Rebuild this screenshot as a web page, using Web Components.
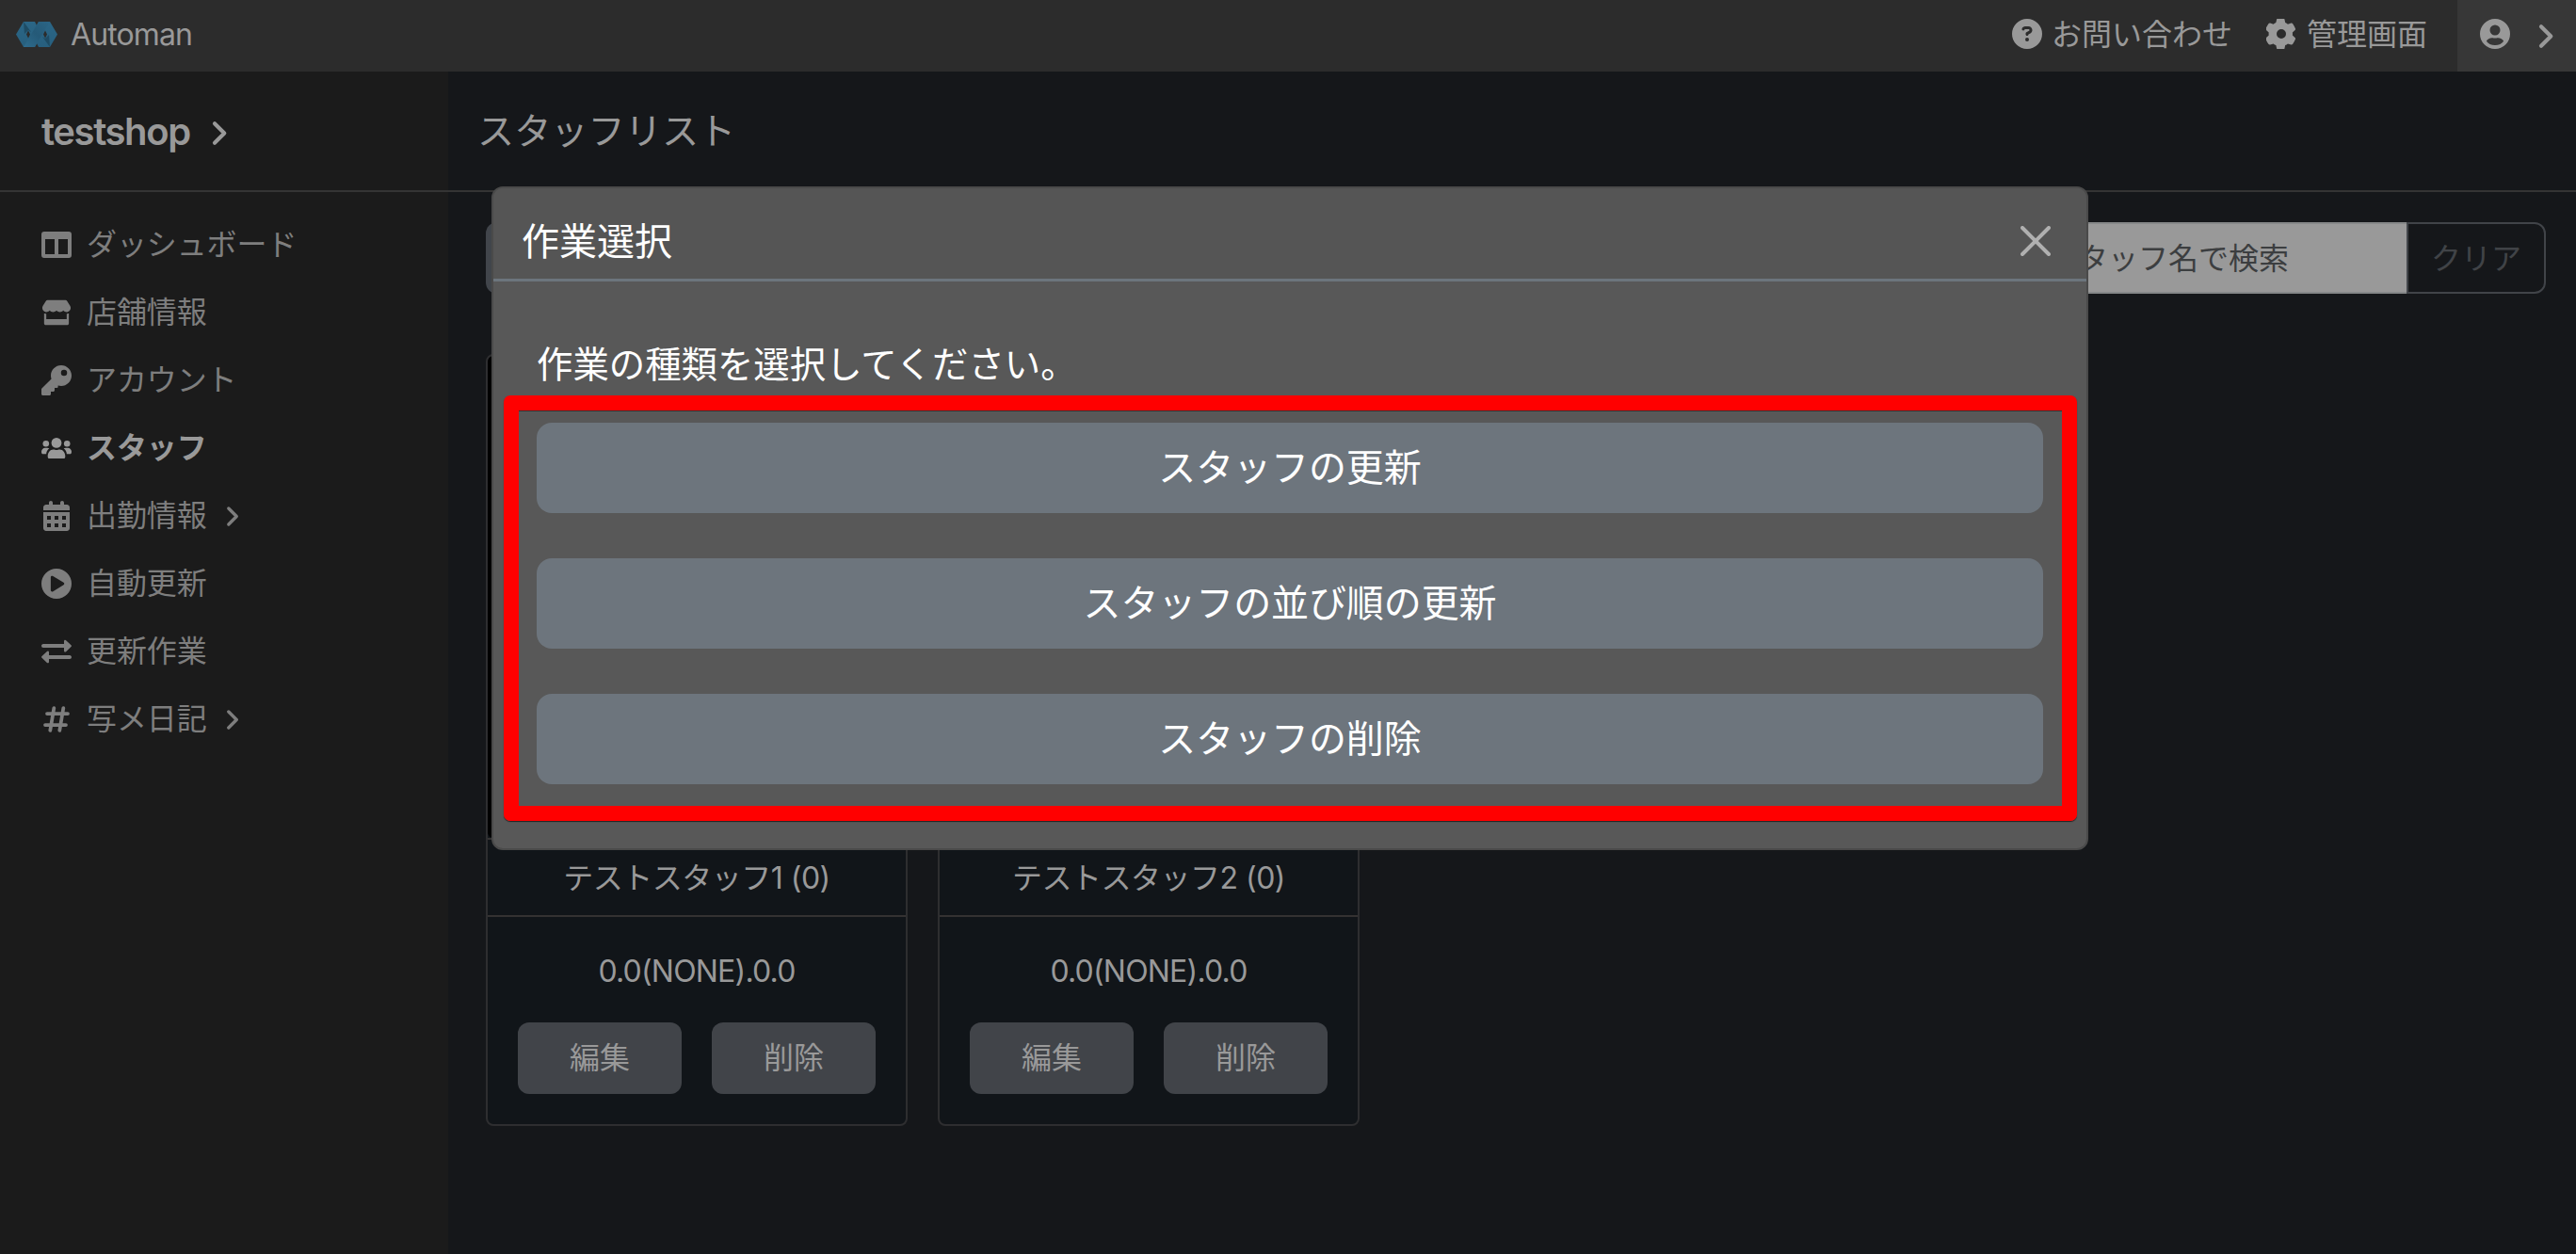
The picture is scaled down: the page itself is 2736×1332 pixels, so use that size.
<!DOCTYPE html>
<html lang="ja">
<head>
<meta charset="utf-8">
<title>Automan</title>
<style>
    html, body {
        margin: 0;
        height: 100%;
        overflow: hidden;
    }

    body {
        background: #15171a;
        color: #999;
        font-family: Inter, "Noto Sans CJK JP", sans-serif;
        font-size: 32px;
        line-height: 48px;
    }
</style>
</head>
<body>
<automan-app></automan-app>

<script>
// Icon shapes: [viewBox, markup]
const icons = {
    help: ['0 0 512 512', '<path fill-rule="evenodd" d="M256 0a256 256 0 1 1 0 512a256 256 0 0 1 0-512zM170 165c8-22 29-37 53-37h58c35 0 63 28 63 63c0 23-12 43-32 55l-32 18c0 13-11 24-24 24s-24-11-24-24v-14c0-9 5-17 12-21l44-25c5-3 8-8 8-13c0-9-7-15-15-15h-58c-4 0-7 2-8 5l-1 1c-4 13-18 19-30 15c-13-4-19-18-15-31zM256 320a32 32 0 1 1 0 64a32 32 0 0 1 0-64z"/>'],
    gear: ['0 0 512 512', '<path fill-rule="evenodd" d="M496 167c3 9 0 18-7 25l-43 39c2 17 2 33 0 50l43 39c7 7 10 16 7 25c-12 32-28 61-48 88c-6 7-16 9-25 7l-56-18c-13 10-28 19-44 25l-12 58c-2 9-9 16-19 18c-32 5-64 5-96 0c-9-2-16-9-18-18l-13-58c-16-6-30-15-43-25l-56 18c-9 3-19 0-25-7c-20-26-36-56-48-88c-3-9 0-18 7-25l43-39c-2-17-2-33 0-50l-43-39c-7-7-10-16-7-25c12-32 28-61 48-88c6-7 16-10 25-7l56 18c13-10 27-19 43-25l13-58c2-9 9-16 18-18c32-5 64-5 96 0c10 2 17 9 19 18l12 58c16 6 31 15 44 25l56-18c9-3 19 0 25 7c20 27 36 56 48 88zM256 336a80 80 0 1 0 0-160a80 80 0 1 0 0 160z"/>'],
    user: ['0 0 512 512', '<path fill-rule="evenodd" d="M256 0a256 256 0 1 1 0 512a256 256 0 0 1 0-512zM256 104a88 88 0 1 0 0 176a88 88 0 0 0 0-176zM256 448c64 0 118-24 146-68c-14-36-56-58-96-58c-22 0-28 6-50 6s-28-6-50-6c-40 0-82 22-96 58c28 44 82 68 146 68z"/>'],
    chevron: ['0 0 320 512', '<path d="M90 96L250 256L90 416" fill="none" stroke="currentColor" stroke-width="64" stroke-linecap="round" stroke-linejoin="round"/>'],
    close: ['0 0 16 16', '<path d="M1 1L15 15M15 1L1 15" fill="none" stroke="currentColor" stroke-width="2" stroke-linecap="round"/>'],
    columns: ['0 0 512 512', '<path fill-rule="evenodd" d="M48 32H464a48 48 0 0 1 48 48V432a48 48 0 0 1-48 48H48a48 48 0 0 1-48-48V80a48 48 0 0 1 48-48zM64 160V416H224V160zM288 160V416H448V160z"/>'],
    store: ['0 0 576 512', '<path d="M547 125L490 34C484 24 473 16 460 16H116C104 16 92 24 86 34L29 125c-30 47-3 113 52 120c4 1 8 1 12 1c26 0 49-11 65-29c16 18 39 29 65 29s49-11 65-29c16 18 39 29 65 29s49-11 65-29c16 18 39 29 65 29c4 0 8 0 12-1c55-7 82-73 52-120zM500 278c-6 1-11 2-17 2V384H93V280c-6 0-12-1-17-2c-9-1-17-2-25-3V464c0 18 15 32 33 32H492c18 0 32-14 32-32V275c-8 1-16 2-24 3z"/>'],
    key: ['0 0 512 512', '<path fill-rule="evenodd" d="M336 352c97 0 176-79 176-176S433 0 336 0S160 79 160 176c0 19 3 37 9 54L7 391c-5 5-7 11-7 17v80c0 13 11 24 24 24h112c13 0 24-11 24-24v-40h40c13 0 24-11 24-24v-40h40c6 0 12-2 17-7l1-33c17 5 35 8 54 8zM384 76a52 52 0 1 1 0 104a52 52 0 1 1 0-104z"/>'],
    users: ['0 0 640 512', '<circle cx="320" cy="144" r="108"/><circle cx="96" cy="160" r="66"/><circle cx="544" cy="160" r="66"/><path d="M134 430C134 350 180 284 252 284C280 284 290 298 320 298S360 284 388 284C460 284 506 350 506 430C506 464 495 478 475 478H165C145 478 134 464 134 430zM0 330c0-44 36-80 80-80h43c16 0 31 4 45 10C125 290 105 332 103 382H41C10 382 0 362 0 330zM640 330c0-44-36-80-80-80h-43c-16 0-31 4-45 10c43 30 63 72 65 122h62c31 0 41-20 41-52z"/>'],
    calendar: ['0 0 448 512', '<path fill-rule="evenodd" d="M128 0c18 0 32 14 32 32V64H288V32c0-18 14-32 32-32s32 14 32 32V64h48c27 0 48 22 48 48v48H0V112C0 86 22 64 48 64H96V32C96 14 110 0 128 0zM0 192H448V464c0 26-21 48-48 48H48c-26 0-48-22-48-48zM64 256v64h64V256zM192 256v64h64V256zM320 256v64h64V256zM64 384v64h64V384zM192 384v64h64V384zM320 384v64h64V384z"/>'],
    play: ['0 0 512 512', '<path fill-rule="evenodd" d="M0 256a256 256 0 1 1 512 0a256 256 0 1 1-512 0zM172 125c-9 5-14 12-14 21V366c0 9 5 16 14 21s17 4 25 0L377 277c7-5 11-12 11-21s-4-16-11-20L197 126c-8-5-17-5-25-1z"/>'],
    exchange: ['0 0 512 512', '<path d="M32 128H384V84c0-26 20-32 38-14l74 70c21 20 21 24 0 44l-74 70c-18 18-38 12-38-14V192H32c-42 0-42-64 0-64zM480 320c42 0 42 64 0 64H128v44c0 26-20 32-38 14l-74-70c-21-20-21-24 0-44l74-70c18-18 38-12 38 14v48z"/>'],
    hash: ['0 0 448 512', '<path d="M181 66L117 446M341 66L277 446M64 160H416M32 352H384" fill="none" stroke="currentColor" stroke-width="60" stroke-linecap="round"/>']
};

class AppIcon extends HTMLElement {
    constructor() {
        super();
        this.attachShadow({ mode: 'open' });
    }

    connectedCallback() {
        const [box, shape] = icons[this.getAttribute('name')];
        this.shadowRoot.innerHTML = `
            <style>
                :host { display: block; flex: none; width: 32px; height: 32px; }
                svg { display: block; width: 100%; height: 100%; fill: currentColor; }
            </style>
            <svg viewBox="${box}">${shape}</svg>
        `;
    }
}
customElements.define('app-icon', AppIcon);

class AppLogo extends HTMLElement {
    constructor() {
        super();
        this.attachShadow({ mode: 'open' });
        this.shadowRoot.innerHTML = `
            <style>
                :host { display: block; width: 44px; height: 27px; }
                svg { display: block; }
            </style>
            <svg width="44" height="27" viewBox="0 0 44 27">
                <defs>
                    <linearGradient id="a" x1="0" y1="0" x2="0" y2="1">
                        <stop offset="0" stop-color="#2b6686"/><stop offset="1" stop-color="#275f7e"/>
                    </linearGradient>
                    <linearGradient id="b" x1="1" y1="0" x2="0" y2="1">
                        <stop offset="0" stop-color="#2b6585"/><stop offset=".5" stop-color="#255a78"/><stop offset="1" stop-color="#2e6c8e"/>
                    </linearGradient>
                </defs>
                <path fill="url(#a)" d="M8 0H20L22 4L24 0H36L44 13.500L36 27H24L22 23L20 27H8L0 13.500z"/>
                <path fill="#1c465d" d="M8 0L16 11L13 9L9 13zM36 27L28 16L31 18L35 14z" opacity=".8"/>
                <path fill="url(#b)" d="M24 0H36L20 27H8z"/>
                <path fill="#2c2c2c" d="M13 9.500L15 13.500L13 17.500L11 13.500zM31 9.500L33 13.500L31 17.500L29 13.500z"/>
            </svg>
        `;
    }
}
customElements.define('app-logo', AppLogo);

class AppHeader extends HTMLElement {
    constructor() {
        super();
        this.attachShadow({ mode: 'open' });
        this.shadowRoot.innerHTML = `
            <style>
                :host {
                    display: flex;
                    align-items: center;
                    height: 76px;
                    background: #2c2c2c;
                }
                app-logo { margin: -3px 0 0 17px; }
                .brand { margin: -2px 0 0 14px; letter-spacing: -0.9px; }
                .links { display: flex; height: 100%; margin-left: auto; }
                .link { display: flex; align-items: center; margin-right: 36px; }
                .link span { margin-top: -3px; }
                .link + .link { margin-right: 32px; }
                .link app-icon { margin: -5px 10px 0 0; }
                .link + .link app-icon { margin-right: 11px; }
                .account {
                    display: flex;
                    align-items: center;
                    box-sizing: border-box;
                    width: 126px;
                    padding-left: 24px;
                    background: #373737;
                }
                .account app-icon { margin-top: -5px; }
                .account app-icon:last-child { width: 21px; height: 33px; margin: 1px 0 0 27px; }
            </style>
            <app-logo></app-logo>
            <span class="brand">Automan</span>
            <div class="links">
                <div class="link"><app-icon name="help"></app-icon><span>お問い合わせ</span></div>
                <div class="link"><app-icon name="gear"></app-icon><span>管理画面</span></div>
                <div class="account"><app-icon name="user"></app-icon><app-icon name="chevron"></app-icon></div>
            </div>
        `;
    }
}
customElements.define('app-header', AppHeader);

class NavItem extends HTMLElement {
    constructor() {
        super();
        this.attachShadow({ mode: 'open' });
    }

    connectedCallback() {
        this.shadowRoot.innerHTML = `
            <style>
                :host { display: flex; align-items: center; height: 72px; color: #7e7e7e; }
                :host([active]) { color: #999; font-weight: 700; }
                .more { width: 17px; height: 27px; margin-left: 18px; }
                .label { margin: -1px 0 0 16px; letter-spacing: -0.1px; }
            </style>
            <app-icon name="${this.getAttribute('icon')}"></app-icon>
            <span class="label"><slot></slot></span>
            ${this.hasAttribute('more') ? '<app-icon class="more" name="chevron"></app-icon>' : ''}
        `;
    }
}
customElements.define('nav-item', NavItem);

class SideBar extends HTMLElement {
    constructor() {
        super();
        this.attachShadow({ mode: 'open' });
        this.shadowRoot.innerHTML = `
            <style>
                :host { display: block; width: 476px; background: #1b1b1b; }
                .shop {
                    display: flex;
                    align-items: center;
                    height: 126px;
                    padding-left: 44px;
                    border-bottom: 2px solid #343434;
                    font-size: 40px;
                    font-weight: 600;
                    letter-spacing: -1.4px;
                }
                .shop span { padding-top: 2px; }
                .shop app-icon { width: 21px; height: 33px; margin: 5px 0 0 20px; }
                nav { padding: 20px 44px; }
            </style>
            <div class="shop"><span>testshop</span><app-icon name="chevron"></app-icon></div>
            <nav>
                <nav-item icon="columns">ダッシュボード</nav-item>
                <nav-item icon="store">店舗情報</nav-item>
                <nav-item icon="key">アカウント</nav-item>
                <nav-item icon="users" active>スタッフ</nav-item>
                <nav-item icon="calendar" more>出勤情報</nav-item>
                <nav-item icon="play">自動更新</nav-item>
                <nav-item icon="exchange">更新作業</nav-item>
                <nav-item icon="hash" more>写メ日記</nav-item>
            </nav>
        `;
    }
}
customElements.define('side-bar', SideBar);

class StaffCard extends HTMLElement {
    constructor() {
        super();
        this.attachShadow({ mode: 'open' });
        this.shadowRoot.innerHTML = `
            <style>
                :host {
                    display: block;
                    box-sizing: border-box;
                    width: 448px;
                    height: 820px;
                    border: 2px solid #2e2e30;
                    border-radius: 8px;
                    background: #111519;
                    text-align: center;
                    overflow: hidden;
                }
                .photo { height: 512px; background: #000; border-radius: 6px; }
                .name {
                    height: 80px;
                    line-height: 82px;
                    border: solid #343232;
                    border-width: 2px 0;
                    letter-spacing: -0.5px;
                }
                .size { margin-top: 34px; letter-spacing: -0.8px; }
                .actions { display: flex; gap: 32px; padding: 30px 32px; }
                button {
                    flex: 1;
                    height: 76px;
                    padding: 0;
                    border: 0;
                    border-radius: 12px;
                    background: #414449;
                    color: inherit;
                    font: inherit;
                }
            </style>
            <div class="photo"></div>
            <div class="name"><slot></slot></div>
            <div class="size">0.0(NONE).0.0</div>
            <div class="actions"><button>編集</button><button>削除</button></div>
        `;
    }
}
customElements.define('staff-card', StaffCard);

class StaffPage extends HTMLElement {
    constructor() {
        super();
        this.attachShadow({ mode: 'open' });
        this.shadowRoot.innerHTML = `
            <style>
                :host { display: block; flex: 1; }
                h1 {
                    margin: 0;
                    height: 126px;
                    line-height: 126px;
                    padding-left: 31px;
                    border-bottom: 2px solid #343434;
                    font-size: 39.2px;
                    font-weight: 400;
                }
                .tools { display: flex; justify-content: space-between; padding: 32px 32px 0 40px; }
                .add { width: 200px; height: 76px; border-radius: 12px; background: #41454b; }
                .search { display: flex; height: 76px; }
                .field {
                    box-sizing: border-box;
                    width: 406px;
                    padding-left: 25px;
                    line-height: 73px;
                    border: solid #868889;
                    border-width: 2px 0;
                    background: #999;
                    color: #3c3e40;
                }
                .clear {
                    box-sizing: border-box;
                    width: 148px;
                    line-height: 73px;
                    text-align: center;
                    border: 2px solid #414449;
                    border-radius: 0 12px 12px 0;
                    color: #404347;
                }
                .cards { display: flex; gap: 32px; padding: 64px 40px 0; }
            </style>
            <h1>スタッフリスト</h1>
            <div class="tools">
                <div class="add"></div>
                <div class="search">
                    <div class="field">スタッフ名で検索</div>
                    <div class="clear">クリア</div>
                </div>
            </div>
            <div class="cards">
                <staff-card>テストスタッフ1 (0)</staff-card>
                <staff-card>テストスタッフ2 (0)</staff-card>
            </div>
        `;
    }
}
customElements.define('staff-page', StaffPage);

class WorkModal extends HTMLElement {
    constructor() {
        super();
        this.attachShadow({ mode: 'open' });
        this.shadowRoot.innerHTML = `
            <style>
                /* The dialog floats over the page */
                :host {
                    position: absolute;
                    left: 522px;
                    top: 198px;
                    box-sizing: border-box;
                    width: 1696px;
                    height: 705px;
                    border: 2px solid #4a4a4a;
                    border-radius: 12px;
                    background: #585858;
                    color: #fff;
                    font-size: 40px;
                }
                header {
                    display: flex;
                    justify-content: space-between;
                    align-items: center;
                    height: 96px;
                    padding: 0 38px 0 30px;
                    border-bottom: 3px solid #6c757d;
                    border-radius: 10px 10px 0 0;
                    background: #555;
                }
                header span { padding-top: 17px; }
                header app-icon { margin-top: 16px; color: #b0b0b0; }
                p { margin: 0; padding: 63px 46px 0; font-size: 38.4px; line-height: 50px; }
                .frame {
                    box-sizing: border-box;
                    width: 1671px;
                    height: 452px;
                    margin: 8px 0 0 11px;
                    padding: 13px 20px 0 19px;
                    border: 16px solid #f00;
                    border-radius: 7px;
                    box-shadow: 0 1px 1px #222, inset 0 1px 0 #333;
                }
                button {
                    display: block;
                    width: 100%;
                    height: 96px;
                    margin-bottom: 48px;
                    padding: 0;
                    border: 0;
                    border-radius: 16px;
                    background: #6d757d;
                    color: #fff;
                    font: inherit;
                    letter-spacing: -0.1px;
                }
            </style>
            <header><span>作業選択</span><app-icon name="close"></app-icon></header>
            <p>作業の種類を選択してください。</p>
            <div class="frame">
                <button>スタッフの更新</button>
                <button>スタッフの並び順の更新</button>
                <button>スタッフの削除</button>
            </div>
        `;
    }
}
customElements.define('work-modal', WorkModal);

class AutomanApp extends HTMLElement {
    constructor() {
        super();
        this.attachShadow({ mode: 'open' });
        this.shadowRoot.innerHTML = `
            <style>
                :host { display: flex; flex-direction: column; height: 100vh; }
                .content { display: flex; flex: 1; min-height: 0; }
            </style>
            <app-header></app-header>
            <div class="content">
                <side-bar></side-bar>
                <staff-page></staff-page>
            </div>
            <work-modal></work-modal>
        `;
    }
}
customElements.define('automan-app', AutomanApp);
</script>
</body>
</html>
